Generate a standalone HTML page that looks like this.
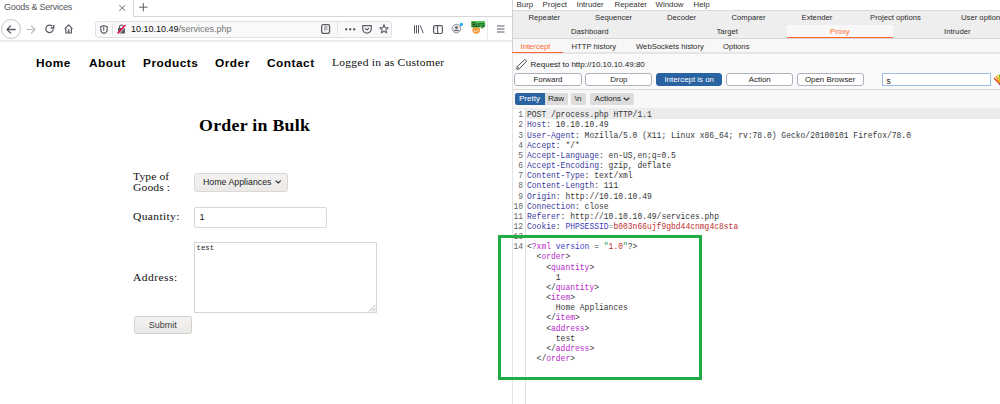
<!DOCTYPE html>
<html><head><meta charset="utf-8">
<style>
*{margin:0;padding:0;box-sizing:border-box}
html,body{width:1000px;height:404px;overflow:hidden;background:#fff;position:relative;font-family:"Liberation Sans",sans-serif}
.a{position:absolute;white-space:pre}
.ff{font-family:"Liberation Sans",sans-serif}
.sr{font-family:"Liberation Serif",serif}
.mo{font-family:"Liberation Mono",monospace}
svg{position:absolute;overflow:visible}
.nav{top:56px;font-size:11px;line-height:14px;font-weight:bold;color:#000;letter-spacing:0.45px;transform:scaleX(1.08);transform-origin:0 0}
.bm{font-size:7.9px;line-height:10px;color:#333}
.bt{font-size:7.7px;line-height:10px;color:#2c2c2c}
.bb{height:13px;border:1px solid #b0b0be;border-radius:3px;background:#fff;font-size:7.9px;line-height:11.8px;text-align:center;color:#222;font-family:"Liberation Sans",sans-serif}
.bs{height:11.5px;background:#dcdcdc;border-radius:2px;font-size:8.1px;line-height:12.2px;text-align:center;color:#222;font-family:"Liberation Sans",sans-serif}
.ln{font-size:8.8px;line-height:10.15px;color:#666;text-align:right;width:11px;transform:scaleX(0.9091);transform-origin:100% 0}
.code{font-size:8.8px;line-height:10.15px;color:#363636;transform:scaleX(0.9091);transform-origin:0 0}
.hn{color:#3b3b9e}.hv{color:#222}.tg{color:#b826cc}.at{color:#3d3dbd}.sv{color:#c03030}.qt{color:#23a04a}

</style></head><body>
<!-- ============ FIREFOX ============ -->
<div id="ff" class="a" style="left:0;top:0;width:512px;height:404px;background:#fff">
  <!-- tab strip -->
  <div class="a" style="left:133px;top:16px;width:379px;height:1px;background:#d7d7db"></div>
  <div class="a" style="left:133px;top:0;width:1px;height:17px;background:#d7d7db"></div>
  <div class="a ff" style="left:4px;top:1px;font-size:9px;line-height:12px;color:#55555c;letter-spacing:-0.25px">Goods &amp; Services</div>
  <svg style="left:119px;top:4.5px" width="7" height="6" viewBox="0 0 7 6"><path d="M0.3 0.2L6.2 5.8M6.2 0.2L0.3 5.8" stroke="#5f5f69" stroke-width="0.9"/></svg>
  <svg style="left:138.5px;top:3px" width="9" height="9" viewBox="0 0 9 9"><path d="M4.3 0V8.4M0 4.2H8.5" stroke="#5f5f69" stroke-width="1"/></svg>
  <!-- nav bar -->
  <div class="a" style="left:0;top:40px;width:512px;height:2px;background:#ececee"></div>
  <div class="a" style="left:1px;top:19px;width:20px;height:20px;border:1px solid #c4c4c8;border-radius:50%"></div>
  <svg style="left:6px;top:24.5px" width="10" height="9" viewBox="0 0 10 9"><path d="M9.2 4.5H1M4.5 1L1 4.5L4.5 8" stroke="#5b5b66" stroke-width="1.3" fill="none" stroke-linecap="round" stroke-linejoin="round"/></svg>
  <svg style="left:26px;top:24.5px" width="10" height="9" viewBox="0 0 10 9"><path d="M0.8 4.5H9M5.5 1L9 4.5L5.5 8" stroke="#bdbdc3" stroke-width="1.2" fill="none" stroke-linecap="round" stroke-linejoin="round"/></svg>
  <svg style="left:45px;top:24px" width="10" height="10" viewBox="0 0 10 10"><path d="M8.3 5.2A3.75 3.75 0 1 1 7.3 2.2" stroke="#5b5b66" stroke-width="1.25" fill="none"/><path d="M8.7 0.9V4H5.6" stroke="#5b5b66" stroke-width="1.3" fill="none"/></svg>
  <svg style="left:64px;top:24px" width="10" height="10" viewBox="0 0 10 10"><path d="M0.7 4.8L4.6 0.9L8.5 4.8M1.8 3.8V9H7.4V3.8" stroke="#5b5b66" stroke-width="1.2" fill="none" stroke-linejoin="round"/><rect x="3.8" y="5.4" width="1.6" height="3.6" fill="#5b5b66"/></svg>
  <!-- url bar -->
  <div class="a" style="left:95px;top:20.5px;width:297px;height:17.5px;border:1px solid #e0e0e3;border-radius:3px;background:#f9f9fa"></div>
  <svg style="left:100px;top:24.5px" width="8" height="9" viewBox="0 0 8 9"><path d="M4 0.7L7.2 1.7V4.4C7.2 6.4 5.6 7.8 4 8.4C2.4 7.8 0.8 6.4 0.8 4.4V1.7Z" stroke="#5b5b66" stroke-width="1.15" fill="#fff"/><path d="M3.7 2.1V5.8" stroke="#6b6b74" stroke-width="1.2"/></svg>
  <div class="a" style="left:112px;top:23px;width:1px;height:12px;background:#e4e4e7"></div>
  <svg style="left:117px;top:24px" width="9" height="10" viewBox="0 0 9 10"><rect x="1" y="4" width="7" height="5.5" fill="#5b5b66"/><path d="M2.5 4.5V3A2 2 0 0 1 6.5 3V4.5" stroke="#5b5b66" stroke-width="1.1" fill="none"/><path d="M0.5 9.5L8.5 1" stroke="#ff0039" stroke-width="1.2"/><path d="M1.5 10.3L9.3 2" stroke="#fff" stroke-width="0.8"/></svg>
  <div class="a ff" style="left:131px;top:22px;font-size:9px;line-height:15px;color:#0c0c0d">10.10.10.49<span style="color:#737373">/services.php</span></div>
  <!-- url right icons -->
  <svg style="left:321px;top:24px" width="10" height="10" viewBox="0 0 10 10"><rect x="0.65" y="0.65" width="7.9" height="8.8" rx="1.6" stroke="#5b5b66" stroke-width="1.3" fill="none"/><path d="M3 2H6.5V6.2H4.6L3.6 7.6H3Z" fill="#b4b4ba"/></svg>
  <div class="a" style="left:337px;top:22px;width:1px;height:13px;background:#e4e4e7"></div>
  <svg style="left:345px;top:27.5px" width="11" height="3" viewBox="0 0 11 3"><circle cx="1.2" cy="1.3" r="1.1" fill="#3a3a40"/><circle cx="5.2" cy="1.3" r="1.1" fill="#3a3a40"/><circle cx="9.2" cy="1.3" r="1.1" fill="#3a3a40"/></svg>
  <svg style="left:362px;top:25px" width="10" height="9" viewBox="0 0 10 9"><path d="M0.7 0.7H9.3V3.8A4.3 4.3 0 0 1 0.7 3.8Z" stroke="#5b5b66" stroke-width="1.2" fill="none" stroke-linejoin="round"/><path d="M3 3.2L5 5L7 3.2" stroke="#5b5b66" stroke-width="1.1" fill="none"/></svg>
  <svg style="left:379px;top:24px" width="10" height="10" viewBox="0 0 10 10"><path d="M5 0.8L6.2 3.6L9.2 3.8L6.9 5.8L7.6 8.9L5 7.3L2.4 8.9L3.1 5.8L0.8 3.8L3.8 3.6Z" stroke="#5b5b66" stroke-width="1.1" fill="none" stroke-linejoin="round"/></svg>
  <!-- toolbar right icons -->
  <svg style="left:414px;top:24.5px" width="10" height="9" viewBox="0 0 10 9"><path d="M0.5 0.2V8.4M2.5 0.2V8.4M4.5 0.2V8.4M6.3 0.4L9.2 8.2" stroke="#5b5b66" stroke-width="1" fill="none"/></svg>
  <svg style="left:433px;top:24.5px" width="10" height="9" viewBox="0 0 10 9"><rect x="0.6" y="0.6" width="8.8" height="7.9" rx="1.4" stroke="#5b5b66" stroke-width="1.2" fill="none"/><path d="M4.6 0.6V8.4" stroke="#5b5b66" stroke-width="1.1"/><path d="M2.6 2V3.6" stroke="#8a8a92" stroke-width="0.7"/></svg>
  <svg style="left:451px;top:23px" width="12" height="11" viewBox="0 0 12 11"><circle cx="5.4" cy="5.6" r="4.3" stroke="#8a8a92" stroke-width="0.9" fill="#e6e6ea"/><circle cx="5.4" cy="4.6" r="1.3" fill="#55555d"/><path d="M3.2 8C3.8 6.9 7 6.9 7.6 8" stroke="#55555d" stroke-width="1.1" fill="none"/><circle cx="10.4" cy="1.4" r="1.6" fill="#14a8ff"/></svg>
  <svg style="left:471px;top:20.5px" width="15" height="13" viewBox="0 0 15 13"><circle cx="5.2" cy="9.1" r="3.8" fill="#f39a3a"/><path d="M2.6 9.8Q5 11.4 7.8 9.2" stroke="#fff" stroke-width="0.7" fill="none"/><rect x="0" y="0" width="14.2" height="6.4" rx="1" fill="#52c352"/><text x="0.9" y="5.7" font-family="Liberation Sans" font-size="6.4" font-weight="bold" fill="#174a1c" textLength="12.6" lengthAdjust="spacingAndGlyphs">Burp</text></svg>
  <div class="a" style="left:487px;top:19px;width:1px;height:20px;background:#e8e8eb"></div>
  <svg style="left:497px;top:25px" width="8" height="8" viewBox="0 0 8 8"><path d="M0 1H7.5M0 4H7.5M0 7H7.5" stroke="#5b5b66" stroke-width="1.2"/></svg>

  <!-- ====== page content ====== -->
  <div class="a ff nav" style="left:36.4px">Home</div>
  <div class="a ff nav" style="left:89.2px">About</div>
  <div class="a ff nav" style="left:143.3px">Products</div>
  <div class="a ff nav" style="left:214.9px">Order</div>
  <div class="a ff nav" style="left:267.4px">Contact</div>
  <div class="a sr" style="left:331.6px;top:55px;font-size:10.8px;line-height:14px;color:#111;letter-spacing:0.22px;transform:scaleX(1.07);transform-origin:0 0">Logged in as Customer</div>

  <div class="a sr" style="left:198.9px;top:116px;font-size:17px;line-height:20px;font-weight:bold;color:#000;letter-spacing:0.25px;transform:scaleX(1.05);transform-origin:0 0">Order in Bulk</div>

  <div class="a sr" style="left:133px;top:171px;font-size:10.8px;line-height:11px;color:#111;letter-spacing:0.12px;transform:scaleX(1.07);transform-origin:0 0">Type of
Goods :</div>
  <div class="a" style="left:194px;top:173px;width:94px;height:18.5px;border:1px solid #dbd8d4;border-radius:2.5px;background:linear-gradient(#f3f2f1,#eceae8)"></div>
  <div class="a ff" style="left:203px;top:176px;font-size:8.8px;line-height:12px;color:#1a1a1a">Home Appliances</div>
  <svg style="left:274.6px;top:180px" width="7" height="4" viewBox="0 0 7 4"><path d="M0.6 0.6L3.2 3L5.8 0.6" stroke="#2a2a2a" stroke-width="1.05" fill="none"/></svg>

  <div class="a sr" style="left:132.8px;top:209px;font-size:10.8px;line-height:14px;color:#111;letter-spacing:0.33px;transform:scaleX(1.07);transform-origin:0 0">Quantity:</div>
  <div class="a" style="left:194px;top:207px;width:133px;height:20.5px;border:1px solid #dad6d2;border-radius:2px;background:#fff"></div>
  <div class="a ff" style="left:199.5px;top:211px;font-size:9px;line-height:12px;color:#111">1</div>

  <div class="a sr" style="left:132.8px;top:269.5px;font-size:10.8px;line-height:14px;color:#111;letter-spacing:0.42px;transform:scaleX(1.07);transform-origin:0 0">Address:</div>
  <div class="a" style="left:194px;top:242px;width:183px;height:71px;border:1px solid #d9d5d1;background:#fff"></div>
  <div class="a mo" style="left:196.5px;top:242.5px;font-size:7.3px;line-height:10px;color:#222">test</div>
  <svg style="left:368px;top:304px" width="8" height="8" viewBox="0 0 8 8"><path d="M7.5 1L1 7.5M7.5 4L4 7.5M7.5 6.5L6.5 7.5" stroke="#999" stroke-width="0.8"/></svg>

  <div class="a" style="left:134px;top:316px;width:57.5px;height:17.5px;border:1px solid #d4d0cc;border-radius:2.5px;background:linear-gradient(#f4f3f2,#ebe9e7)"></div>
  <div class="a ff" style="left:134px;top:319px;width:57.5px;text-align:center;font-size:9px;line-height:12px;color:#3c3c3c">Submit</div>
</div>

<!-- ============ BURP ============ -->
<div id="bp">
  <!-- menu bar -->
  <div class="a" style="left:512px;top:0;width:488px;height:404px;background:#fff"></div>
  <div class="a" style="left:512px;top:0;width:1px;height:404px;background:#e4e4e4"></div><div class="a" style="left:512px;top:0;width:1px;height:53px;background:#d2d2d2"></div>
  <div class="a ff bm" style="left:516.5px;top:-0.5px">Burp</div>
  <div class="a ff bm" style="left:542.5px;top:-0.5px">Project</div>
  <div class="a ff bm" style="left:576.5px;top:-0.5px">Intruder</div>
  <div class="a ff bm" style="left:614.5px;top:-0.5px">Repeater</div>
  <div class="a ff bm" style="left:655.5px;top:-0.5px">Window</div>
  <div class="a ff bm" style="left:693.5px;top:-0.5px">Help</div>
  <!-- main tabs -->
  <div class="a" style="left:513px;top:10px;width:487px;height:28px;background:#eeeeee;border-top:1px solid #dadada"></div>
  <div class="a" style="left:787px;top:24.8px;width:106px;height:13.5px;background:#f8f8f8"></div>
  <div class="a" style="left:787px;top:37.3px;width:106px;height:1.6px;background:#ff6633"></div>
  <div class="a" style="left:513px;top:38px;width:487px;height:1px;background:#d6d6d6"></div>
  <div class="a ff bt" style="left:528.5px;top:13px">Repeater</div>
  <div class="a ff bt" style="left:595px;top:13px">Sequencer</div>
  <div class="a ff bt" style="left:667px;top:13px">Decoder</div>
  <div class="a ff bt" style="left:731.5px;top:13px">Comparer</div>
  <div class="a ff bt" style="left:801.5px;top:13px">Extender</div>
  <div class="a ff bt" style="left:870px;top:13px">Project options</div>
  <div class="a ff bt" style="left:961px;top:13px">User options</div>
  <div class="a ff bt" style="left:571px;top:27px">Dashboard</div>
  <div class="a ff bt" style="left:716.5px;top:27px">Target</div>
  <div class="a ff bt" style="left:830px;top:27px;color:#ff6633">Proxy</div>
  <div class="a ff bt" style="left:944px;top:27px">Intruder</div>
  <!-- sub tabs -->
  <div class="a" style="left:513px;top:39px;width:487px;height:13.5px;background:#f7f7f7"></div>
  <div class="a" style="left:513px;top:52px;width:487px;height:2px;background:#e6e6e6"></div>
  <div class="a" style="left:512px;top:51.8px;width:50.5px;height:1.6px;background:#ff6633"></div>
  <div class="a ff bt" style="left:520.5px;top:41.5px;color:#ff6633">Intercept</div>
  <div class="a ff bt" style="left:571.5px;top:41.5px">HTTP history</div>
  <div class="a ff bt" style="left:636px;top:41.5px">WebSockets history</div>
  <div class="a ff bt" style="left:723px;top:41.5px">Options</div>
  <!-- intercept panel -->
  <div class="a" style="left:513px;top:53.5px;width:487px;height:55px;background:#fafafa"></div>
  <svg style="left:515.5px;top:58.5px" width="11" height="11" viewBox="0 0 11 11"><path d="M0.7 10.3L1.3 7.6L8.2 0.9Q8.9 0.3 9.6 0.9L10.1 1.4Q10.7 2.1 10.1 2.8L3.4 9.7Z" stroke="#3a3a3a" stroke-width="0.85" fill="none" stroke-linejoin="round"/><path d="M1.3 7.6L3.4 9.7" stroke="#3a3a3a" stroke-width="0.7"/></svg>
  <div class="a ff bt" style="left:530.5px;top:59.6px;color:#222;font-size:8px">Request to http://10.10.10.49:80</div>
  <div class="a bb" style="left:514.3px;top:73px;width:67.3px">Forward</div>
  <div class="a bb" style="left:585.4px;top:73px;width:67px">Drop</div>
  <div class="a bb" style="left:656px;top:73px;width:66.4px;background:#2a63a1;border-color:#2a63a1;color:#fff">Intercept is on</div>
  <div class="a bb" style="left:726.2px;top:73px;width:67.2px">Action</div>
  <div class="a bb" style="left:796.6px;top:73px;width:67.1px">Open Browser</div>
  <div class="a" style="left:882px;top:73px;width:108.5px;height:13px;border:1px solid #9ebde3;background:#fff"></div>
  <div class="a ff bt" style="left:886.5px;top:75.5px;color:#222;font-size:8.4px">s</div>
  <svg style="left:993px;top:74px" width="8" height="12" viewBox="0 0 8 12"><path d="M1 4L7 10" stroke="#d42" stroke-width="1.5"/><path d="M3 2L7 9" stroke="#f80" stroke-width="1.3"/><path d="M5 1L7 8" stroke="#fc0" stroke-width="1.3"/><path d="M6.5 0.5L7.5 8" stroke="#6b3" stroke-width="1.3"/><path d="M6 10L8 11" stroke="#84c" stroke-width="1.3"/></svg>
  <div class="a" style="left:513px;top:89px;width:487px;height:1px;background:#dcdcdc"></div>
  <!-- pretty toolbar -->
  <div class="a" style="left:513px;top:90px;width:487px;height:18px;background:#f8f8f8"></div>
  <div class="a" style="left:513px;top:107.5px;width:487px;height:1px;background:#ececec"></div>
  <div class="a bs" style="left:514.5px;top:93px;width:30px;background:#2a63a1;color:#fff;border-radius:2px 0 0 2px">Pretty</div>
  <div class="a bs" style="left:544.5px;top:93px;width:23px;border-radius:0 2px 2px 0">Raw</div>
  <div class="a bs" style="left:571px;top:93px;width:14.5px">\n</div>
  <div class="a bs" style="left:589.5px;top:93px;width:44.5px;text-align:left;padding-left:5px">Actions</div>
  <svg style="left:622.5px;top:97px" width="7" height="4" viewBox="0 0 7 4"><path d="M0.7 0.7L3.5 3.3L6.3 0.7" stroke="#333" stroke-width="1.2" fill="none"/></svg>
  <!-- code -->
  <div class="a" style="left:526px;top:109px;width:474px;height:9.8px;background:#ebebeb"></div>
  <div class="a" style="left:525px;top:108px;width:1px;height:296px;background:#e2e2e2"></div>
  
  <div class="a mo ln" style="left:511.5px;top:110.3px">1
2
3
4
5
6
7
8
9
10
11
12
13
14</div>
  <div class="a mo code" style="left:527px;top:110.3px">POST /process.php HTTP/1.1
<span class="hn">Host</span>: 10.10.10.49
<span class="hn">User-Agent</span>: Mozilla/5.0 (X11; Linux x86_64; rv:78.0) Gecko/20100101 Firefox/78.0
<span class="hn">Accept</span>: */*
<span class="hn">Accept-Language</span>: en-US,en;q=0.5
<span class="hn">Accept-Encoding</span>: gzip, deflate
<span class="hn">Content-Type</span>: text/xml
<span class="hn">Content-Length</span>: 111
<span class="hn">Origin</span>: http://10.10.10.49
<span class="hn">Connection</span>: close
<span class="hn">Referer</span>: http://10.10.10.49/services.php
<span class="hn">Cookie</span>: <span class="at">PHPSESSID</span><span style="color:#888">=</span><span class="sv">b003n66ujf9gbd44cnmg4c8sta</span>

&lt;<span class="tg">?xml</span> <span class="at">version</span> = <span class="qt">"</span><span class="sv">1.0</span><span class="qt">"</span>?&gt;
  &lt;<span class="tg">order</span>&gt;
    &lt;<span class="tg">quantity</span>&gt;
      1
    &lt;/<span class="tg">quantity</span>&gt;
    &lt;<span class="tg">item</span>&gt;
      Home Appliances
    &lt;/<span class="tg">item</span>&gt;
    &lt;<span class="tg">address</span>&gt;
      test
    &lt;/<span class="tg">address</span>&gt;
  &lt;/<span class="tg">order</span>&gt;</div>
  <!-- green box -->
  <div class="a" style="left:498px;top:235px;width:204px;height:145px;border:3px solid #22ac46"></div>
</div>
</body></html>
